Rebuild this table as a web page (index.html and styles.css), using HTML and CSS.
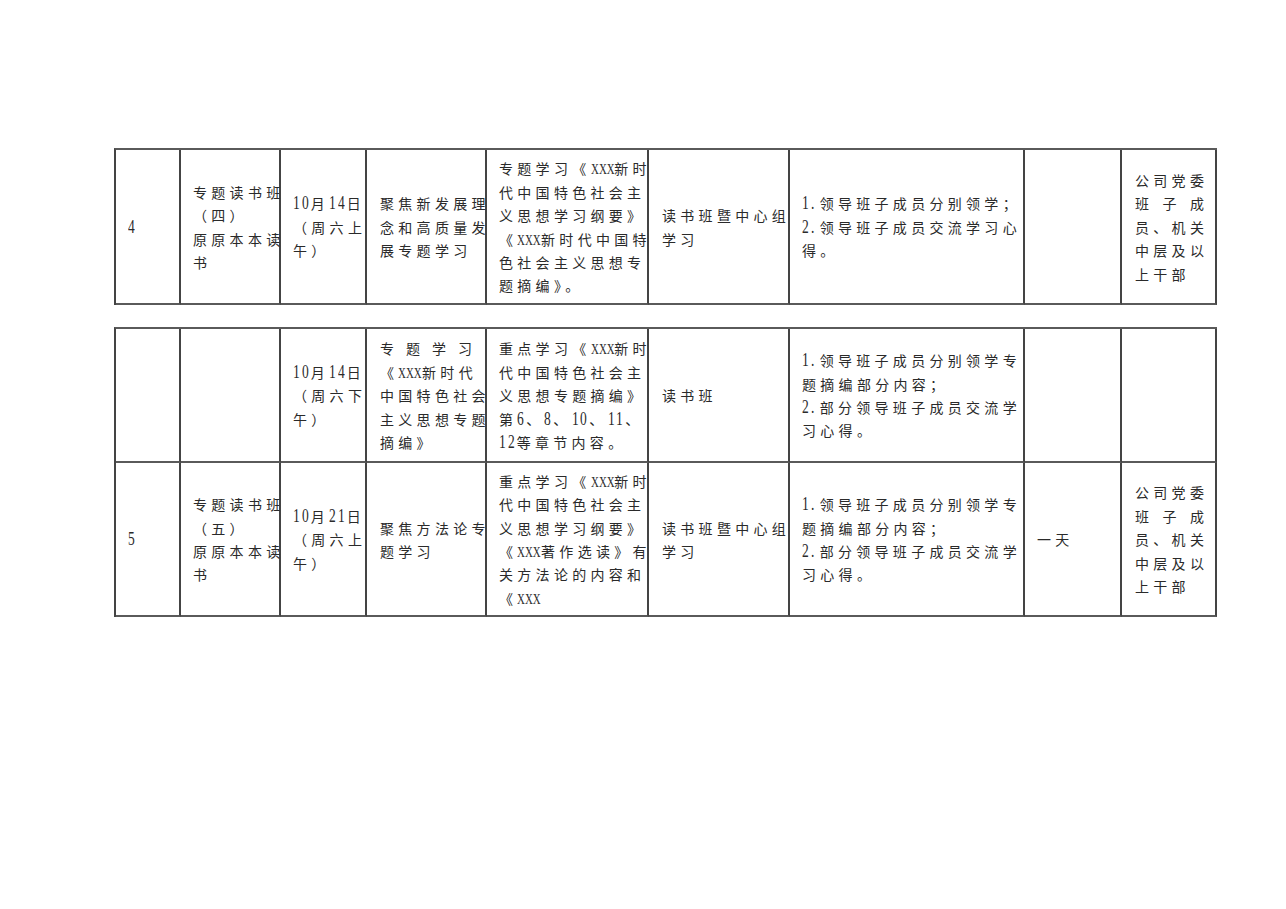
FILE: index.html
```html
<!DOCTYPE html>
<html lang="zh-CN">
<head>
<meta charset="utf-8">
<title>专题读书班安排</title>
<link rel="stylesheet" href="styles.css">
</head>
<body>
<div class="page">
  <div class="tbl t1">
    <div class="c num"><div><span class="d">4</span></div></div>
    <div class="c"><div>专题读书班</div><div>（四）</div><div>原原本本读</div><div>书</div></div>
    <div class="c"><div><span class="d">1</span><span class="d">0</span>月<span class="d">1</span><span class="d">4</span>日</div><div>（周六上</div><div>午）</div></div>
    <div class="c p13"><div>聚焦新发展理</div><div>念和高质量发</div><div>展专题学习</div></div>
    <div class="c"><div>专题学习《<span class="xx">XXX</span>新时</div><div>代中国特色社会主</div><div>义思想学习纲要》</div><div>《<span class="xx">XXX</span>新时代中国特</div><div>色社会主义思想专</div><div>题摘编》。</div></div>
    <div class="c p13"><div>读书班暨中心组</div><div>学习</div></div>
    <div class="c"><div><span class="d">1</span><span class="d">.</span>领导班子成员分别领学；</div><div><span class="d">2</span><span class="d">.</span>领导班子成员交流学习心</div><div>得。</div></div>
    <div class="c"></div>
    <div class="c p13"><div>公司党委</div><div class="just w69">班子成</div><div>员、机关</div><div>中层及以</div><div>上干部</div></div>
  </div>

  <div class="tbl t2">
    <div class="c"></div>
    <div class="c"></div>
    <div class="c"><div><span class="d">1</span><span class="d">0</span>月<span class="d">1</span><span class="d">4</span>日</div><div>（周六下</div><div>午）</div></div>
    <div class="c p13"><div class="just w92">专题学习</div><div>《<span class="xx">XXX</span>新时代</div><div>中国特色社会</div><div>主义思想专题</div><div>摘编》</div></div>
    <div class="c"><div>重点学习《<span class="xx">XXX</span>新时</div><div>代中国特色社会主</div><div>义思想专题摘编》</div><div>第<span class="d">6</span>、<span class="d">8</span>、<span class="d">1</span><span class="d">0</span>、<span class="d">1</span><span class="d">1</span>、</div><div><span class="d">1</span><span class="d">2</span>等章节内容。</div></div>
    <div class="c p13"><div>读书班</div></div>
    <div class="c"><div><span class="d">1</span><span class="d">.</span>领导班子成员分别领学专</div><div>题摘编部分内容；</div><div><span class="d">2</span><span class="d">.</span>部分领导班子成员交流学</div><div>习心得。</div></div>
    <div class="c"></div>
    <div class="c"></div>

    <div class="c num"><div><span class="d">5</span></div></div>
    <div class="c"><div>专题读书班</div><div>（五）</div><div>原原本本读</div><div>书</div></div>
    <div class="c"><div><span class="d">1</span><span class="d">0</span>月<span class="d">2</span><span class="d">1</span>日</div><div>（周六上</div><div>午）</div></div>
    <div class="c p13"><div>聚焦方法论专</div><div>题学习</div></div>
    <div class="c"><div>重点学习《<span class="xx">XXX</span>新时</div><div>代中国特色社会主</div><div>义思想学习纲要》</div><div>《<span class="xx">XXX</span>著作选读》有</div><div>关方法论的内容和</div><div>《<span class="xx">XXX</span></div></div>
    <div class="c p13"><div>读书班暨中心组</div><div>学习</div></div>
    <div class="c"><div><span class="d">1</span><span class="d">.</span>领导班子成员分别领学专</div><div>题摘编部分内容；</div><div><span class="d">2</span><span class="d">.</span>部分领导班子成员交流学</div><div>习心得。</div></div>
    <div class="c"><div>一天</div></div>
    <div class="c p13"><div>公司党委</div><div class="just w69">班子成</div><div>员、机关</div><div>中层及以</div><div>上干部</div></div>
  </div>
</div>
</body>
</html>
```

FILE: styles.css
```css
html, body {
  margin: 0;
  padding: 0;
  background: #ffffff;
}

.page {
  padding: 148px 0 0 114px;
  font-family: "Liberation Serif", "Noto Sans CJK SC", serif;
  font-size: 14px;
  color: #2a2a2a;
}

.tbl {
  display: grid;
  grid-template-columns: 65px 100px 86px 120px 162px 141px 235px 97px 95px;
  width: 1101px;
  border-left: 2px solid #444444;
  border-top: 2px solid #5a5a5a;
}

.t1 {
  grid-auto-rows: 155px;
}

.t2 {
  margin-top: 22px;
  grid-template-rows: 134px 154px;
}

.c {
  box-sizing: border-box;
  border-right: 2px solid #444444;
  border-bottom: 2px solid #5a5a5a;
  padding: 4px 0 0 12px;
  display: flex;
  flex-direction: column;
  justify-content: center;
  line-height: 23.4px;
  letter-spacing: 4.3px;
  white-space: nowrap;
  overflow: visible;
}

.p13 {
  padding-left: 13px;
}

.num {
  letter-spacing: 0;
}

.d {
  display: inline-block;
  width: 6.7px;
  margin-right: 2.15px;
  font-size: 18px;
  line-height: 1;
  letter-spacing: 0;
  transform: scaleX(0.75);
  transform-origin: left center;
}

.xx {
  display: inline-block;
  letter-spacing: 0;
  transform: scaleX(0.78);
  transform-origin: left center;
  margin-right: -6.6px;
}

.just {
  letter-spacing: 0;
  text-align: justify;
  text-align-last: justify;
}

.w69 {
  width: 69px;
}

.w92 {
  width: 92px;
}
```
